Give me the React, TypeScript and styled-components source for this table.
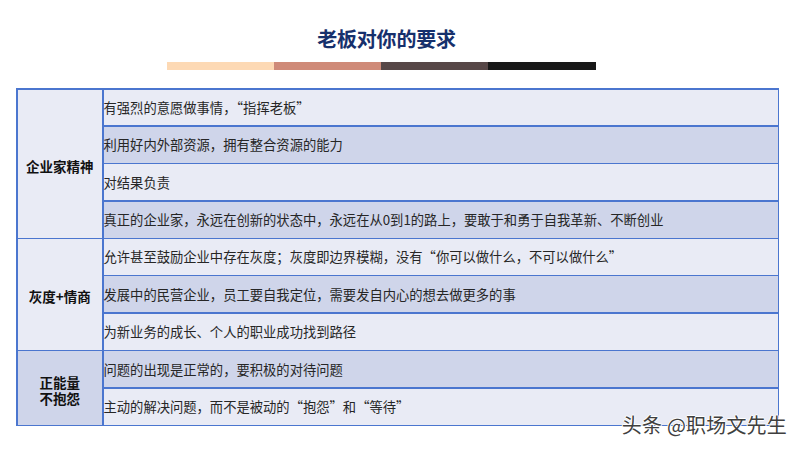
import React from "react";
import styled, { createGlobalStyle } from "styled-components";

const Global = createGlobalStyle`
  html, body { margin: 0; padding: 0; background: #ffffff; }
  body { font-family: "Noto Sans CJK SC", "Noto Sans", sans-serif; }
`;

const Page = styled.div`
  position: relative;
  width: 800px;
  height: 450px;
  overflow: hidden;
  display: flex;
  flex-direction: column;
  align-items: center;
  background: #ffffff;
`;

const Title = styled.h1`
  margin: 24px 0 0 -27px;
  height: 30px;
  line-height: 30px;
  font-size: 20px;
  font-weight: 700;
  color: #16306c;
  letter-spacing: -0.2px;
`;

const Bar = styled.div`
  margin-top: 8px;
  margin-left: -38px;
  display: flex;
  width: 429px;
  height: 8px;
`;

const Seg = styled.div<{ $c: string }>`
  flex: 1;
  background: ${(p) => p.$c};
`;

const Table = styled.div`
  margin-top: 18px;
  align-self: flex-start;
  margin-left: 16px;
  width: 763px;
  height: 338px;
  box-sizing: border-box;
  display: grid;
  grid-template-columns: 84.5px 1fr;
  grid-template-rows: repeat(9, 1fr);
  gap: 1.5px;
  padding: 1.5px;
  background: #4b76cf;
`;

const Label = styled.div<{ $start: number; $span: number; $dark?: boolean }>`
  grid-column: 1;
  grid-row: ${(p) => p.$start} / span ${(p) => p.$span};
  display: flex;
  align-items: center;
  justify-content: center;
  text-align: center;
  padding-top: 4px;
  background: ${(p) => (p.$dark ? "#cfd5ea" : "#e9ebf5")};
  font-size: 13.5px;
  font-weight: 700;
  line-height: 16px;
  color: #111111;
`;

const Cell = styled.div<{ $row: number; $dark?: boolean }>`
  grid-column: 2;
  grid-row: ${(p) => p.$row};
  display: flex;
  align-items: center;
  padding-left: 0;
  background: ${(p) => (p.$dark ? "#cfd5ea" : "#e9ebf5")};
  font-size: 13.3px;
  color: #262626;
  white-space: nowrap;
`;

const Watermark = styled.div`
  position: absolute;
  right: 13px;
  top: 411px;
  font-size: 20px;
  line-height: 28px;
  color: #3f3f3f;
  letter-spacing: 0.2px;
  text-shadow: 1px 0 0 #fff, -1px 0 0 #fff, 0 1px 0 #fff, 0 -1px 0 #fff;
`;

const groups: { label: React.ReactNode; dark?: boolean; rows: string[] }[] = [
  {
    label: "企业家精神",
    rows: [
      "有强烈的意愿做事情，“指挥老板”",
      "利用好内外部资源，拥有整合资源的能力",
      "对结果负责",
      "真正的企业家，永远在创新的状态中，永远在从0到1的路上，要敢于和勇于自我革新、不断创业",
    ],
  },
  {
    label: "灰度+情商",
    rows: [
      "允许甚至鼓励企业中存在灰度；灰度即边界模糊，没有“你可以做什么，不可以做什么”",
      "发展中的民营企业，员工要自我定位，需要发自内心的想去做更多的事",
      "为新业务的成长、个人的职业成功找到路径",
    ],
  },
  {
    label: (
      <>
        正能量
        <br />
        不抱怨
      </>
    ),
    dark: true,
    rows: ["问题的出现是正常的，要积极的对待问题", "主动的解决问题，而不是被动的“抱怨”和“等待”"],
  },
];

export default function App() {
  let idx = 0;
  return (
    <Page>
      <Global />
      <Title>老板对你的要求</Title>
      <Bar>
        <Seg $c="#fdd9b4" />
        <Seg $c="#cf8a78" />
        <Seg $c="#574747" />
        <Seg $c="#181818" />
      </Bar>
      <Table>
        {groups.map((g, gi) => {
          const start = idx + 1;
          return (
            <React.Fragment key={gi}>
              <Label $start={start} $span={g.rows.length} $dark={g.dark}>
                {g.label}
              </Label>
              {g.rows.map((r) => {
                const i = idx++;
                return (
                  <Cell key={i} $row={i + 1} $dark={i % 2 === 1}>
                    {r}
                  </Cell>
                );
              })}
            </React.Fragment>
          );
        })}
      </Table>
      <Watermark>头条 @职场文先生</Watermark>
    </Page>
  );
}
